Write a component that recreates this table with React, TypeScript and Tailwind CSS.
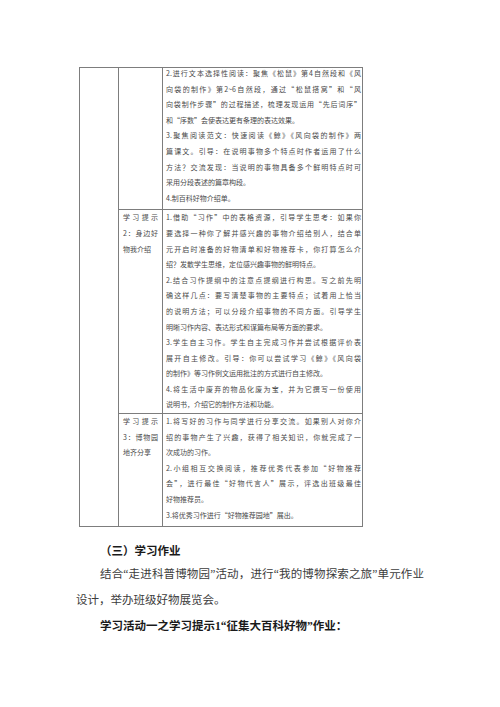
import type { FC } from "react";

type Row = {
  label: string[];
  paras: string[][];
  pad: string;
};

const rows: Row[] = [
  {
    label: [],
    pad: "-mt-[2px] pb-[3px]",
    paras: [
      [
        "2.进行文本选择性阅读：聚焦《松鼠》第4自然段和《风",
        "向袋的制作》第2~6自然段，通过“松鼠搭窝”和“风",
        "向袋制作步骤”的过程描述，梳理发现运用“先后词序”",
        "和“序数”会使表达更有条理的表达效果。",
      ],
      [
        "3.聚焦阅读范文：快速阅读《鲸》《风向袋的制作》两",
        "篇课文。引导：在说明事物多个特点时作者运用了什么",
        "方法？交流发现：当说明的事物具备多个鲜明特点时可",
        "采用分段表述的篇章构段。",
      ],
      ["4.制百科好物介绍单。"],
    ],
  },
  {
    label: ["学习提示", "2：身边好", "物我介绍"],
    pad: "pt-0 pb-0",
    paras: [
      [
        "1.借助“习作”中的表格资源，引导学生思考：如果你",
        "要选择一种你了解并感兴趣的事物介绍给别人，结合单",
        "元开启时准备的好物清单和好物推荐卡，你打算怎么介",
        "绍？发散学生思维，定位感兴趣事物的鲜明特点。",
      ],
      [
        "2.结合习作提纲中的注意点提纲进行构思。写之前先明",
        "确这样几点：要写清楚事物的主要特点；试着用上恰当",
        "的说明方法；可以分段介绍事物的不同方面。引导学生",
        "明晰习作内容、表达形式和谋篇布局等方面的要求。",
      ],
      [
        "3.学生自主习作。学生自主完成习作并尝试根据评价表",
        "展开自主修改。引导：你可以尝试学习《鲸》《风向袋",
        "的制作》等习作例文运用批注的方式进行自主修改。",
      ],
      [
        "4.将生活中废弃的物品化废为宝，并为它撰写一份使用",
        "说明书，介绍它的制作方法和功能。",
      ],
    ],
  },
  {
    label: ["学习提示", "3：博物园", "地齐分享"],
    pad: "pt-0 pb-[3px]",
    paras: [
      [
        "1.将写好的习作与同学进行分享交流。如果别人对你介",
        "绍的事物产生了兴趣，获得了相关知识，你就完成了一",
        "次成功的习作。",
      ],
      [
        "2.小组相互交换阅读，推荐优秀代表参加“好物推荐",
        "会”，进行最佳“好物代言人”展示，评选出班级最佳",
        "好物推荐员。",
      ],
      ["3.将优秀习作进行“好物推荐园地”展出。"],
    ],
  },
];

// each line is its own block so breaks match; all but the last are stretched
const Lines: FC<{ lines: string[] }> = ({ lines }) => (
  <>
    {lines.map((line, i) => (
      <div
        key={line}
        className={
          i < lines.length - 1
            ? "whitespace-nowrap text-justify [text-align-last:justify]"
            : "whitespace-nowrap"
        }
      >
        {line}
      </div>
    ))}
  </>
);

const App: FC = () => {
  return (
    <div className="relative h-[707px] w-[500px] overflow-hidden bg-white">
      {/* Table */}
      <div className="pl-[79px] pt-[67px]">
        <table className="w-[283px] table-fixed border-collapse font-['Noto_Sans_CJK_SC',sans-serif] text-[7px] leading-[15.6px] text-[#4a4a4a]">
          <colgroup>
            <col className="w-[39px]" />
            <col className="w-[44px]" />
            <col className="w-[200px]" />
          </colgroup>
          <tbody>
            {rows.map((row, idx) => (
              <tr key={idx}>
                {idx === 0 && (
                  <td
                    rowSpan={rows.length}
                    className="border border-[#7d7d7d] p-0 align-top"
                  />
                )}
                <td className="border border-[#7d7d7d] p-0 pl-[4px] pr-[4px] align-top">
                  <div className={row.pad}>
                    <Lines lines={row.label} />
                  </div>
                </td>
                <td className="border border-[#7d7d7d] p-0 pl-[3px] pr-[1px] align-top">
                  <div className={row.pad}>
                    {row.paras.map((p) => (
                      <Lines key={p[0]} lines={p} />
                    ))}
                  </div>
                </td>
              </tr>
            ))}
          </tbody>
        </table>
      </div>

      {/* Homework section */}
      <div className="mt-[11px] w-[348px] ml-[76px] font-['Liberation_Serif','Noto_Sans_CJK_SC',serif] text-[11.5px] leading-[26px] text-[#3c3c3c]">
        <p className="-mb-[3px] indent-[24px] font-bold text-[#1a1a1a]">（三）学习作业</p>
        <p className="indent-[24px] text-justify">
          结合“走进科普博物园”活动，进行“我的博物探索之旅”单元作业设计，举办班级好物展览会。
        </p>
        <p className="indent-[24px] font-bold text-[#1a1a1a]">
          学习活动一之学习提示1“征集大百科好物”作业：
        </p>
      </div>
    </div>
  );
};

export default App;
